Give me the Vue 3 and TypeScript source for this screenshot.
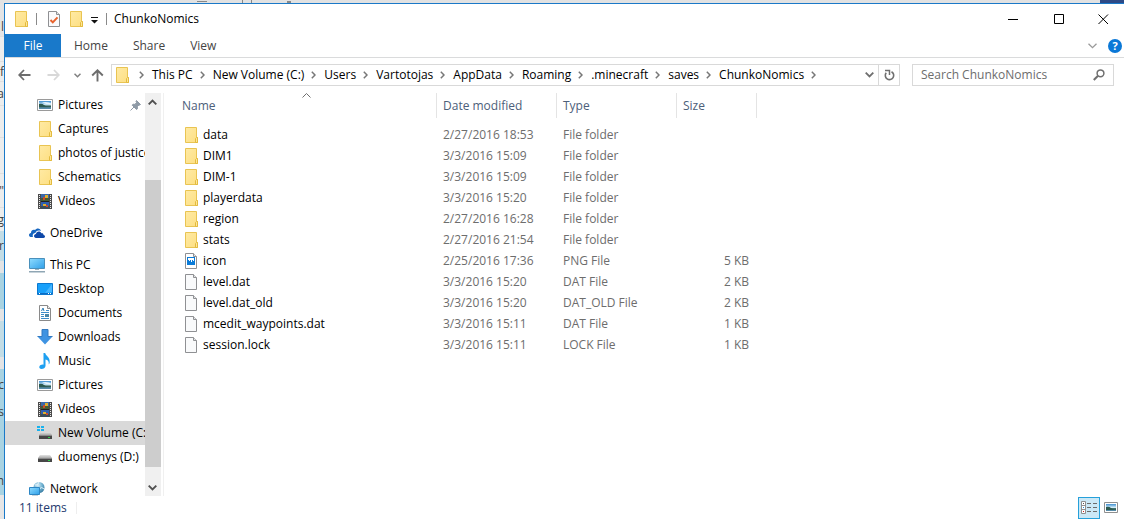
<script setup lang="ts">
import { ref } from 'vue'

interface TreeItem {
  label: string
  icon: string
  level: number
  gap?: boolean
  pinned?: boolean
  selected?: boolean
}

interface FileRow {
  name: string
  icon: string
  date: string
  type: string
  size: string
}

interface Strip {
  height: number
  tone: string
  text?: string
}

const title = 'ChunkoNomics'
const query = ref('')
const tabs = ['Home', 'Share', 'View']
const crumbs = ['This PC', 'New Volume (C:)', 'Users', 'Vartotojas', 'AppData', 'Roaming', '.minecraft', 'saves', 'ChunkoNomics']

const tree: TreeItem[] = [
  { label: 'Pictures', icon: 'picture', level: 2, pinned: true },
  { label: 'Captures', icon: 'folder', level: 2 },
  { label: 'photos of justice', icon: 'folder', level: 2 },
  { label: 'Schematics', icon: 'folder', level: 2 },
  { label: 'Videos', icon: 'video', level: 2 },
  { label: 'OneDrive', icon: 'onedrive', level: 1, gap: true },
  { label: 'This PC', icon: 'pc', level: 1, gap: true },
  { label: 'Desktop', icon: 'desktop', level: 2 },
  { label: 'Documents', icon: 'documents', level: 2 },
  { label: 'Downloads', icon: 'downloads', level: 2 },
  { label: 'Music', icon: 'music', level: 2 },
  { label: 'Pictures', icon: 'picture', level: 2 },
  { label: 'Videos', icon: 'video', level: 2 },
  { label: 'New Volume (C:)', icon: 'osdrive', level: 2, selected: true },
  { label: 'duomenys (D:)', icon: 'drive', level: 2 },
  { label: 'Network', icon: 'network', level: 1, gap: true },
]

const columns = [
  { label: 'Name', key: 'name' },
  { label: 'Date modified', key: 'date' },
  { label: 'Type', key: 'type' },
  { label: 'Size', key: 'size' },
]

const files: FileRow[] = [
  { name: 'data', icon: 'folder', date: '2/27/2016 18:53', type: 'File folder', size: '' },
  { name: 'DIM1', icon: 'folder', date: '3/3/2016 15:09', type: 'File folder', size: '' },
  { name: 'DIM-1', icon: 'folder', date: '3/3/2016 15:09', type: 'File folder', size: '' },
  { name: 'playerdata', icon: 'folder', date: '3/3/2016 15:20', type: 'File folder', size: '' },
  { name: 'region', icon: 'folder', date: '2/27/2016 16:28', type: 'File folder', size: '' },
  { name: 'stats', icon: 'folder', date: '2/27/2016 21:54', type: 'File folder', size: '' },
  { name: 'icon', icon: 'png', date: '2/25/2016 17:36', type: 'PNG File', size: '5 KB' },
  { name: 'level.dat', icon: 'file', date: '3/3/2016 15:20', type: 'DAT File', size: '2 KB' },
  { name: 'level.dat_old', icon: 'file', date: '3/3/2016 15:20', type: 'DAT_OLD File', size: '2 KB' },
  { name: 'mcedit_waypoints.dat', icon: 'file', date: '3/3/2016 15:11', type: 'DAT File', size: '1 KB' },
  { name: 'session.lock', icon: 'file', date: '3/3/2016 15:11', type: 'LOCK File', size: '1 KB' },
]

// Slice of the page that lies behind the window
const strips: Strip[] = [
  { height: 15, tone: 'grey' },
  { height: 18, tone: 'grey', text: 'l' },
  { height: 25, tone: 'pale' },
  { height: 20, tone: 'pale', text: 'f' },
  { height: 24, tone: 'pale', text: 'a' },
  { height: 32, tone: 'pale' },
  { height: 36, tone: 'pale' },
  { height: 34, tone: 'pale', text: '"' },
  { height: 24, tone: 'pale', text: 'g' },
  { height: 30, tone: 'sky', text: 'r' },
  { height: 12, tone: 'grey' },
  { height: 36, tone: 'blue' },
  { height: 12, tone: 'grey' },
  { height: 36, tone: 'sky' },
  { height: 12, tone: 'grey' },
  { height: 32, tone: 'blue', text: 'c' },
  { height: 22, tone: 'blue', text: 's' },
  { height: 44, tone: 'blue' },
  { height: 28, tone: 'blue', text: 'h' },
]
</script>

<template>
  <svg class="sprite" aria-hidden="true">
    <defs>
      <linearGradient id="gFolder" x1="0" y1="0" x2="1" y2="1">
        <stop offset="0" stop-color="#ffeaa4" /><stop offset="1" stop-color="#fddf82" />
      </linearGradient>
      <linearGradient id="gScreen" x1="0" y1="0" x2="1" y2="1">
        <stop offset="0" stop-color="#8fdcff" /><stop offset="1" stop-color="#2f9fe8" />
      </linearGradient>
      <linearGradient id="gSky" x1="0" y1="0" x2="0" y2="1">
        <stop offset="0" stop-color="#3f8fd0" /><stop offset=".5" stop-color="#d4edf8" />
        <stop offset=".6" stop-color="#3f6b62" /><stop offset="1" stop-color="#5c93b8" />
      </linearGradient>
      <linearGradient id="gDrive" x1="0" y1="0" x2="0" y2="1">
        <stop offset="0" stop-color="#e4e4e4" /><stop offset="1" stop-color="#a9a9a9" />
      </linearGradient>
      <radialGradient id="gGlobe" cx=".4" cy=".3" r=".8">
        <stop offset="0" stop-color="#d6effa" /><stop offset=".5" stop-color="#6fb0d0" /><stop offset="1" stop-color="#2b6f97" />
      </radialGradient>
    </defs>
    <symbol id="folder" viewBox="0 0 16 16">
      <path d="M2.5.5h11v10h1v5h-12z" fill="url(#gFolder)" stroke="#e9c452" />
      <path d="M12.5 15.5v-4l1-1h1v5z" fill="#ffe697" stroke="#e3bb3f" />
    </symbol>
    <symbol id="file" viewBox="0 0 16 16">
      <path d="M2.5.5h8l3 3v12h-11z" fill="#f9fafb" stroke="#8f9093" />
      <path d="M10.5.5v3h3" fill="#e4e5e7" stroke="#8f9093" />
    </symbol>
    <symbol id="png" viewBox="0 0 16 16">
      <path d="M2.5.5h8l3 3v12h-11z" fill="#fff" stroke="#8f9093" />
      <path d="M10.5.5v3h3" fill="#e4e5e7" stroke="#8f9093" />
      <path d="M4 4h8v8H4z" fill="#0a7bd8" />
      <path d="M5 5h6v3h-1V7H9v2H8V7H7v1H6V7H5z" fill="#fff" />
    </symbol>
    <symbol id="check" viewBox="0 0 16 16">
      <path d="M2.5.5h8l3 3v12h-11z" fill="#fafafb" stroke="#8f9093" />
      <path d="M10.5.5v3h3" fill="#e4e5e7" stroke="#8f9093" />
      <path d="M4.5 9l2.3 2.4 4.7-5" fill="none" stroke="#e8622c" stroke-width="2" />
    </symbol>
    <symbol id="picture" viewBox="0 0 16 16">
      <path d="M.5 2.5h15v11H.5z" fill="#fff" stroke="#9a9a9a" />
      <path d="M2 4h12v8H2z" fill="url(#gSky)" />
      <path d="M2 7q3-1 5 1t7 1v1H2z" fill="#2d5b50" />
      <path d="M5 5.5q3-1 7 0l2 1v1q-5 0-9-2z" fill="#e8f5fb" />
    </symbol>
    <symbol id="video" viewBox="0 0 16 16">
      <path d="M1 1h14v15H1z" fill="#4b4b4b" />
      <path d="M4 1h8v7H4z" fill="#3b69a8" /><path d="M4 9h8v7H4z" fill="#2f5fae" />
      <path d="M4 5h8v3H4z" fill="#465c33" /><path d="M4 13h8v3H4z" fill="#3a4c5a" />
      <path d="M8 2h3v3H8zM6 11h3v2H6z" fill="#e0b02c" /><path d="M6 4h2v3H6zM9 12h2v2H9z" fill="#c9492e" />
      <path d="M2.5 2v14M13.5 2v14" stroke="#e9e9e9" stroke-dasharray="1 1" />
      <path d="M4 8.5h8" stroke="#202020" />
    </symbol>
    <symbol id="onedrive" viewBox="0 0 16 16">
      <path d="M4 12H1.6C-.7 11.500-.4 8 2 8c0-2.700 2.300-3.700 4-2.900C7.600 2.500 11.600 3 12 6 8.500 4.900 7 6.400 6.400 8 4 8.200 3.200 10 4 12z" fill="#1565c0" />
      <path d="M7 13c-2.600 0-2.600-3.800 0-4C7.200 6.400 11 5.500 12.500 8.300c1.400-.3 2.100.6 2 1.700 2 .2 2 3 0 3z" fill="#0d47a8" />
    </symbol>
    <symbol id="pc" viewBox="0 0 16 16">
      <path d="M.5 1.500h15v10H.5z" fill="url(#gScreen)" stroke="#4a90bb" />
      <path d="M6 12h4v1H6z" fill="#9db2bf" /><path d="M0 14h16v1.500H0z" fill="#8fa6b4" />
    </symbol>
    <symbol id="desktop" viewBox="0 0 16 16">
      <path d="M.5 2.500h15v11H.5z" fill="#18a0fa" stroke="#0c78cf" />
      <path d="M15 3v8L8 12z" fill="#46b6ff" />
      <path d="M1 12h14v1H1z" fill="#0b6cc4" /><path d="M2 12.500h1M11 12.500h1M13 12.500h1" stroke="#fff" />
    </symbol>
    <symbol id="documents" viewBox="0 0 16 16">
      <path d="M2.500.5h8l3 3v12h-11z" fill="#fff" stroke="#8a8a8a" />
      <path d="M10.500.5v3h3" fill="#eee" stroke="#8a8a8a" />
      <path d="M4 7.500h8M9 5.500h3M4 9.500h3M4 11.500h3M4 13.500h8" stroke="#3b8dcc" />
      <path d="M4.500 6l1.500-3 1 3" fill="none" stroke="#2f7fb8" />
      <path d="M8 9h4v3H8z" fill="#4a86a8" />
    </symbol>
    <symbol id="downloads" viewBox="0 0 16 16">
      <path d="M5 .5h6v7h4.500L8 15.500.5 7.500H5z" fill="#3f93e2" />
      <path d="M5 .5h6v7h4.500M.5 7.500H5v-7" fill="none" stroke="#3279c0" />
    </symbol>
    <symbol id="music" viewBox="0 0 16 16">
      <path d="M6.500 0h1.700c.4 3 5 4 4.500 9.500-.1 1-.6 1.500-1 2 .5-3-.8-4.600-3.200-5V13c-.2 2-2 3-4 3-1.600 0-2.500-1-2.200-2.200.5-1.700 2.600-2.500 4.200-2.100z" fill="#1ea0f1" />
    </symbol>
    <symbol id="drive" viewBox="0 0 16 16">
      <path d="M3 6h10l2 3H1z" fill="url(#gDrive)" />
      <path d="M1 9h14v4H1z" fill="#474747" /><path d="M1 9.500h14" stroke="#8a8a8a" />
      <path d="M11 11h2v1h-2z" fill="#32d34b" />
    </symbol>
    <symbol id="osdrive" viewBox="0 0 16 16">
      <path d="M0 1h3v2H0zM4 1h3v2H4zM0 4h3v2H0zM4 4h3v2H4z" fill="#19b2ee" />
      <path d="M4 7h9l2 3H2z" fill="url(#gDrive)" />
      <path d="M2 10h13v4H2z" fill="#474747" /><path d="M2 10.500h13" stroke="#8a8a8a" />
      <path d="M11 12h2v1h-2z" fill="#32d34b" />
    </symbol>
    <symbol id="network" viewBox="0 0 16 16">
      <circle cx="10" cy="6.500" r="5.500" fill="url(#gGlobe)" />
      <path d="M6 4q3 1 4-3M10 8q3-3 5 0" fill="none" stroke="#e4f4fa" />
      <path d="M.5 6.500h10v7H.5z" fill="url(#gScreen)" stroke="#2d86c4" />
      <path d="M3 15h6" stroke="#8fa6b4" />
    </symbol>
  </svg>

  <div class="screen">
    <div class="behind-top"><i></i><i></i><i></i><b></b></div>
    <div class="behind-left" aria-hidden="true">
      <div v-for="(s, i) in strips" :key="i" class="strip" :class="s.tone" :style="{ height: s.height + 'px' }">
        <span>{{ s.text }}</span>
      </div>
    </div>

    <main class="window">
      <header class="titlebar">
        <svg class="icon"><use href="#folder" /></svg>
        <span class="bar first"></span>
        <button class="quick" aria-label="Properties"><svg class="icon"><use href="#check" /></svg></button>
        <button class="quick" aria-label="New folder"><svg class="icon"><use href="#folder" /></svg></button>
        <button class="quick more" aria-label="Customize toolbar">
          <svg width="7" height="7" viewBox="0 0 7 7"><path d="M0 0h7v1H0zM0 3h7L3.500 6.500z" fill="#111" /></svg>
        </button>
        <span class="bar"></span>
        <h1>{{ title }}</h1>
        <button class="caption" aria-label="Minimize"><svg width="11" height="11"><path d="M0 5.500h10" stroke="#000" /></svg></button>
        <button class="caption" aria-label="Maximize"><svg width="11" height="11"><path d="M.5.5h9v9h-9z" fill="none" stroke="#000" /></svg></button>
        <button class="caption" aria-label="Close"><svg width="11" height="11"><path d="M.5.5l9.500 9.500M10 .5L.5 10" stroke="#000" /></svg></button>
      </header>

      <nav class="ribbon" aria-label="Ribbon">
        <button class="file">File</button>
        <button v-for="t in tabs" :key="t" class="tab">{{ t }}</button>
        <button class="expand" aria-label="Expand the ribbon">
          <svg width="9" height="6"><path d="M.5.7l4 4 4-4" fill="none" stroke="#9a9a9a" stroke-width="1.300" /></svg>
        </button>
        <button class="help" aria-label="Help">?</button>
      </nav>

      <div class="address-row">
        <button class="nav back" aria-label="Back">
          <svg width="13" height="12"><path d="M12.500 6H1.500M6 1L1.200 6 6 11" fill="none" stroke="#6d6d6d" stroke-width="1.800" /></svg>
        </button>
        <button class="nav forward" aria-label="Forward" disabled>
          <svg width="13" height="12"><path d="M.5 6h11M7 1l4.800 5L7 11" fill="none" stroke="#d8d8d8" stroke-width="1.800" /></svg>
        </button>
        <button class="nav recent" aria-label="Recent locations">
          <svg width="7" height="5"><path d="M.5.7l3 3 3-3" fill="none" stroke="#808080" stroke-width="1.500" /></svg>
        </button>
        <button class="nav up" aria-label="Up">
          <svg width="13" height="13"><path d="M6.500 12.500V1.500M1.200 6.500l5.300-5.200 5.300 5.200" fill="none" stroke="#6d6d6d" stroke-width="1.900" /></svg>
        </button>
        <div class="address">
          <svg class="icon"><use href="#folder" /></svg>
          <svg class="sep" width="5" height="8"><path d="M.8.8L4 4 .8 7.200" fill="none" stroke="#777" stroke-width="1.500" /></svg>
          <template v-for="c in crumbs" :key="c">
            <a class="crumb" href="#">{{ c }}</a>
            <svg class="sep" width="5" height="8"><path d="M.8.8L4 4 .8 7.200" fill="none" stroke="#777" stroke-width="1.500" /></svg>
          </template>
          <button class="drop" aria-label="Previous locations">
            <svg width="9" height="6"><path d="M.7.7l3.800 3.800L8.300.7" fill="none" stroke="#6f6f6f" stroke-width="1.800" /></svg>
          </button>
          <button class="refresh" aria-label="Refresh">
            <svg width="11" height="12"><path d="M7.500 2.700A4.200 4.200 0 1 1 2.200 3.800" fill="none" stroke="#6f6f6f" stroke-width="1.600" /><path d="M1 1.500h4.500V6" fill="none" stroke="#6f6f6f" stroke-width="1.500" /></svg>
          </button>
        </div>
        <label class="search">
          <input v-model="query" type="text" aria-label="Search ChunkoNomics" placeholder="Search ChunkoNomics" />
          <svg width="12" height="12"><circle cx="7.500" cy="4.300" r="3.400" fill="none" stroke="#6f6f6f" stroke-width="1.500" /><path d="M5 6.800L.8 11" stroke="#6f6f6f" stroke-width="2" /></svg>
        </label>
      </div>

      <div class="body">
        <nav class="tree" aria-label="Folders">
          <a v-for="(n, i) in tree" :key="i" href="#" class="node" :class="['level' + n.level, { gap: n.gap, selected: n.selected }]">
            <svg class="icon"><use :href="'#' + n.icon" /></svg>
            <span>{{ n.label }}</span>
            <svg v-if="n.pinned" class="pin" width="11" height="11"><path d="M6.500.5l4 4-1 .6-.6-.1-1.600 1.700.2 2-1 .8L2.200 5.200l.8-1 2 .2L6.500 2.500 6 1.300zM4 7L.5 10.500" fill="#8e9aa6" stroke="#8e9aa6" /></svg>
          </a>
        </nav>
        <div class="scroll">
          <button aria-label="Scroll up"><svg width="9" height="6"><path d="M.7 5.300l3.800-3.800 3.800 3.800" fill="none" stroke="#505050" stroke-width="1.900" /></svg></button>
          <div class="track"><div class="before"></div><div class="thumb"></div><div class="after"></div></div>
          <button aria-label="Scroll down"><svg width="9" height="6"><path d="M.7.7l3.800 3.800L8.300.7" fill="none" stroke="#505050" stroke-width="1.900" /></svg></button>
        </div>
        <section class="listing">
          <table>
            <colgroup><col class="c-name" /><col class="c-date" /><col class="c-type" /><col class="c-size" /></colgroup>
            <thead>
              <tr>
                <th v-for="c in columns" :key="c.key" scope="col">
                  <div class="head">{{ c.label }}
                    <svg v-if="c.key === 'name'" class="sort" width="9" height="5"><path d="M.5 4.500l4-4 4 4" fill="none" stroke="#6f6f6f" /></svg>
                  </div>
                </th>
              </tr>
            </thead>
            <tbody>
              <tr v-for="f in files" :key="f.name">
                <td><div class="name"><svg class="icon"><use :href="'#' + f.icon" /></svg>{{ f.name }}</div></td>
                <td>{{ f.date }}</td>
                <td>{{ f.type }}</td>
                <td class="size">{{ f.size }}</td>
              </tr>
            </tbody>
          </table>
        </section>
      </div>

      <footer class="status">
        <span class="count">11 items</span>
        <span class="divider"></span>
        <button class="view active" aria-label="Details view">
          <svg width="16" height="13">
            <path d="M.5.5h4v12h-4zM.5 4.500h4M.5 8.500h4" fill="#fff" stroke="#8f8f8f" />
            <path d="M6 2.500h4M12 2.500h4M6 6.500h4M12 6.500h4M6 10.500h4M12 10.500h4" stroke="#6b6b6b" />
            <path d="M2 2.500h1" stroke="#555" /><path d="M2 6.500h1" stroke="#2b8fd8" /><path d="M2 10.500h1" stroke="#d02020" />
          </svg>
        </button>
        <button class="view" aria-label="Large icons view">
          <svg width="14" height="11"><path d="M.5.5h13v10H.5z" fill="#fff" stroke="#8f8f8f" /><path d="M2 2h10v7H2z" fill="url(#gSky)" /><path d="M2 5q3-1 5 1t5 1v1H2z" fill="#2d5b50" /></svg>
        </button>
      </footer>
    </main>
  </div>
</template>

<style>
html, body { margin: 0; }
</style>

<style scoped>
* { box-sizing: border-box; }
.sprite { position: absolute; width: 0; height: 0; }
.screen {
  display: grid;
  grid-template: 3px minmax(0, 1fr) / 4px minmax(0, 1fr);
  height: 100vh;
  overflow: hidden;
  background: #e6e6e6;
  font: 12px/16px "Open Sans", "Noto Sans", sans-serif;
  color: #000;
}
button { border: 0; padding: 0; background: none; font: inherit; color: inherit; display: flex; align-items: center; justify-content: center; }
a { color: inherit; text-decoration: none; }
svg { display: block; flex: none; }
.icon { width: 16px; height: 16px; }

.behind-top { grid-column: 1 / 3; display: flex; align-items: center; background: #e2e2e2; }
.behind-top i { width: 10px; height: 1px; margin-left: 197px; background: #888; }
.behind-top i + i { width: 10px; height: 3px; margin-left: 35px; background: none; border: solid #888; border-width: 0 1px; }
.behind-top i + i + i { width: 4px; height: 2px; border: 0; background: #888; }
.behind-top b { width: 24px; height: 3px; margin-left: auto; background: #2d4a86; }
.behind-left { overflow: hidden; }
.strip { display: flex; align-items: center; justify-content: flex-end; overflow: hidden; color: #444; }
.grey { background: #e3e4e5; }
.pale { background: #eceded; border-top: 1px solid #dfdfdf; }
.sky { background: #c3dde6; }
.blue { background: #a9d3e2; }

.window {
  display: flex;
  flex-direction: column;
  min-height: 0;
  border: solid #1a79c8;
  border-width: 1px 0 0 1px;
  background: #fff;
}
.titlebar { display: flex; align-items: center; height: 30px; padding-left: 8px; }
.bar { width: 1px; height: 12px; background: #8a8a8a; margin-right: 7px; }
.bar.first { margin: 0 9px 0 7px; }
.quick { margin-right: 6px; }
.quick.more { margin: 2px 8px 0 1px; }
h1 { flex: 1; margin: 0; font-size: 12px; font-weight: 400; }
.caption { width: 46px; height: 28px; }
.caption:last-child { width: 42px; }

.ribbon { display: flex; align-items: center; height: 24px; border-bottom: 1px solid #dadbdc; color: #444; }
.file { width: 56px; height: 23px; background: #1979ca; color: #fff; }
.tab { padding: 0 12px 0 13px; }
.expand { margin-left: auto; }
.help { width: 14px; height: 14px; margin: 0 2px 0 11px; border-radius: 50%; background: #0a78d7; color: #fff; font-size: 11px; font-weight: 700; line-height: 14px; }

.address-row { display: flex; align-items: center; height: 35px; padding: 0 10px 1px 13px; }
.nav { height: 22px; }
.forward { margin-left: 16px; }
.recent { margin-left: 14px; }
.up { margin: 0 7px 0 10px; }
.address { flex: 1; display: flex; align-items: center; min-width: 0; height: 22px; border: 1px solid #d9d9d9; padding-left: 2px; }
.address .icon { margin-right: 9px; }
.crumb { margin: 0 7px 0 8px; white-space: nowrap; }
.drop { width: 18px; margin-left: auto; }
.refresh { width: 21px; height: 20px; border-left: 1px solid #d9d9d9; }
.search { display: flex; align-items: center; width: 202px; height: 22px; margin-left: 12px; padding: 0 8px; border: 1px solid #d9d9d9; }
.search input { flex: 1; min-width: 0; border: 0; padding: 0; outline: 0; font: inherit; background: none; }
.search input::placeholder { color: #6d6d6d; opacity: 1; }

.body { flex: 1; display: flex; min-height: 0; overflow: hidden; }
.tree { width: 140px; overflow: hidden; }
.node { display: flex; align-items: center; height: 24px; white-space: nowrap; overflow: hidden; }
.node span { margin-left: 5px; }
.node.gap { margin-top: 8px; }
.level1 { padding-left: 24px; }
.level2 { padding-left: 32px; }
.selected { background: #d9d9d9; }
.pin { margin: 0 4px 0 auto; }
.scroll { display: flex; flex-direction: column; width: 16px; background: #f0f0f0; }
.scroll button { height: 17px; padding-right: 1px; }
.track { flex: 1; display: flex; flex-direction: column; }
.before { flex: 70; }
.thumb { flex: 287; background: #cdcdcd; }
.after { flex: 12; }
.listing { flex: 1; min-width: 0; margin-left: 2px; padding-left: 18px; border-left: 1px solid #f0f0f0; }
table { border-collapse: collapse; table-layout: fixed; width: 575px; }
.c-name { width: 255px; }
.c-date, .c-type { width: 120px; }
.c-size { width: 80px; }
th, td { padding: 0; font-weight: 400; text-align: left; white-space: nowrap; }
th { height: 31px; vertical-align: top; color: #4c607a; }
.head { position: relative; height: 25px; line-height: 25px; border-right: 1px solid #e4e4e4; }
th + th .head, td + td { padding-left: 6px; }
.sort { position: absolute; left: 120px; top: 0; }
td { height: 21px; color: #6d6d6d; }
.name { display: flex; align-items: center; color: #000; }
.name .icon { margin: 0 4px 0 1px; }
td.size { padding-right: 8px; text-align: right; }

.status { display: flex; align-items: center; height: 23px; padding: 0 2px 0 14px; color: #1e3a6e; }
.divider { width: 1px; height: 12px; margin: 0 auto 0 9px; background: #eee; }
.view { width: 22px; height: 22px; }
.view.active { border: 1px solid #26a0da; background: #cbe8f6; }
</style>
